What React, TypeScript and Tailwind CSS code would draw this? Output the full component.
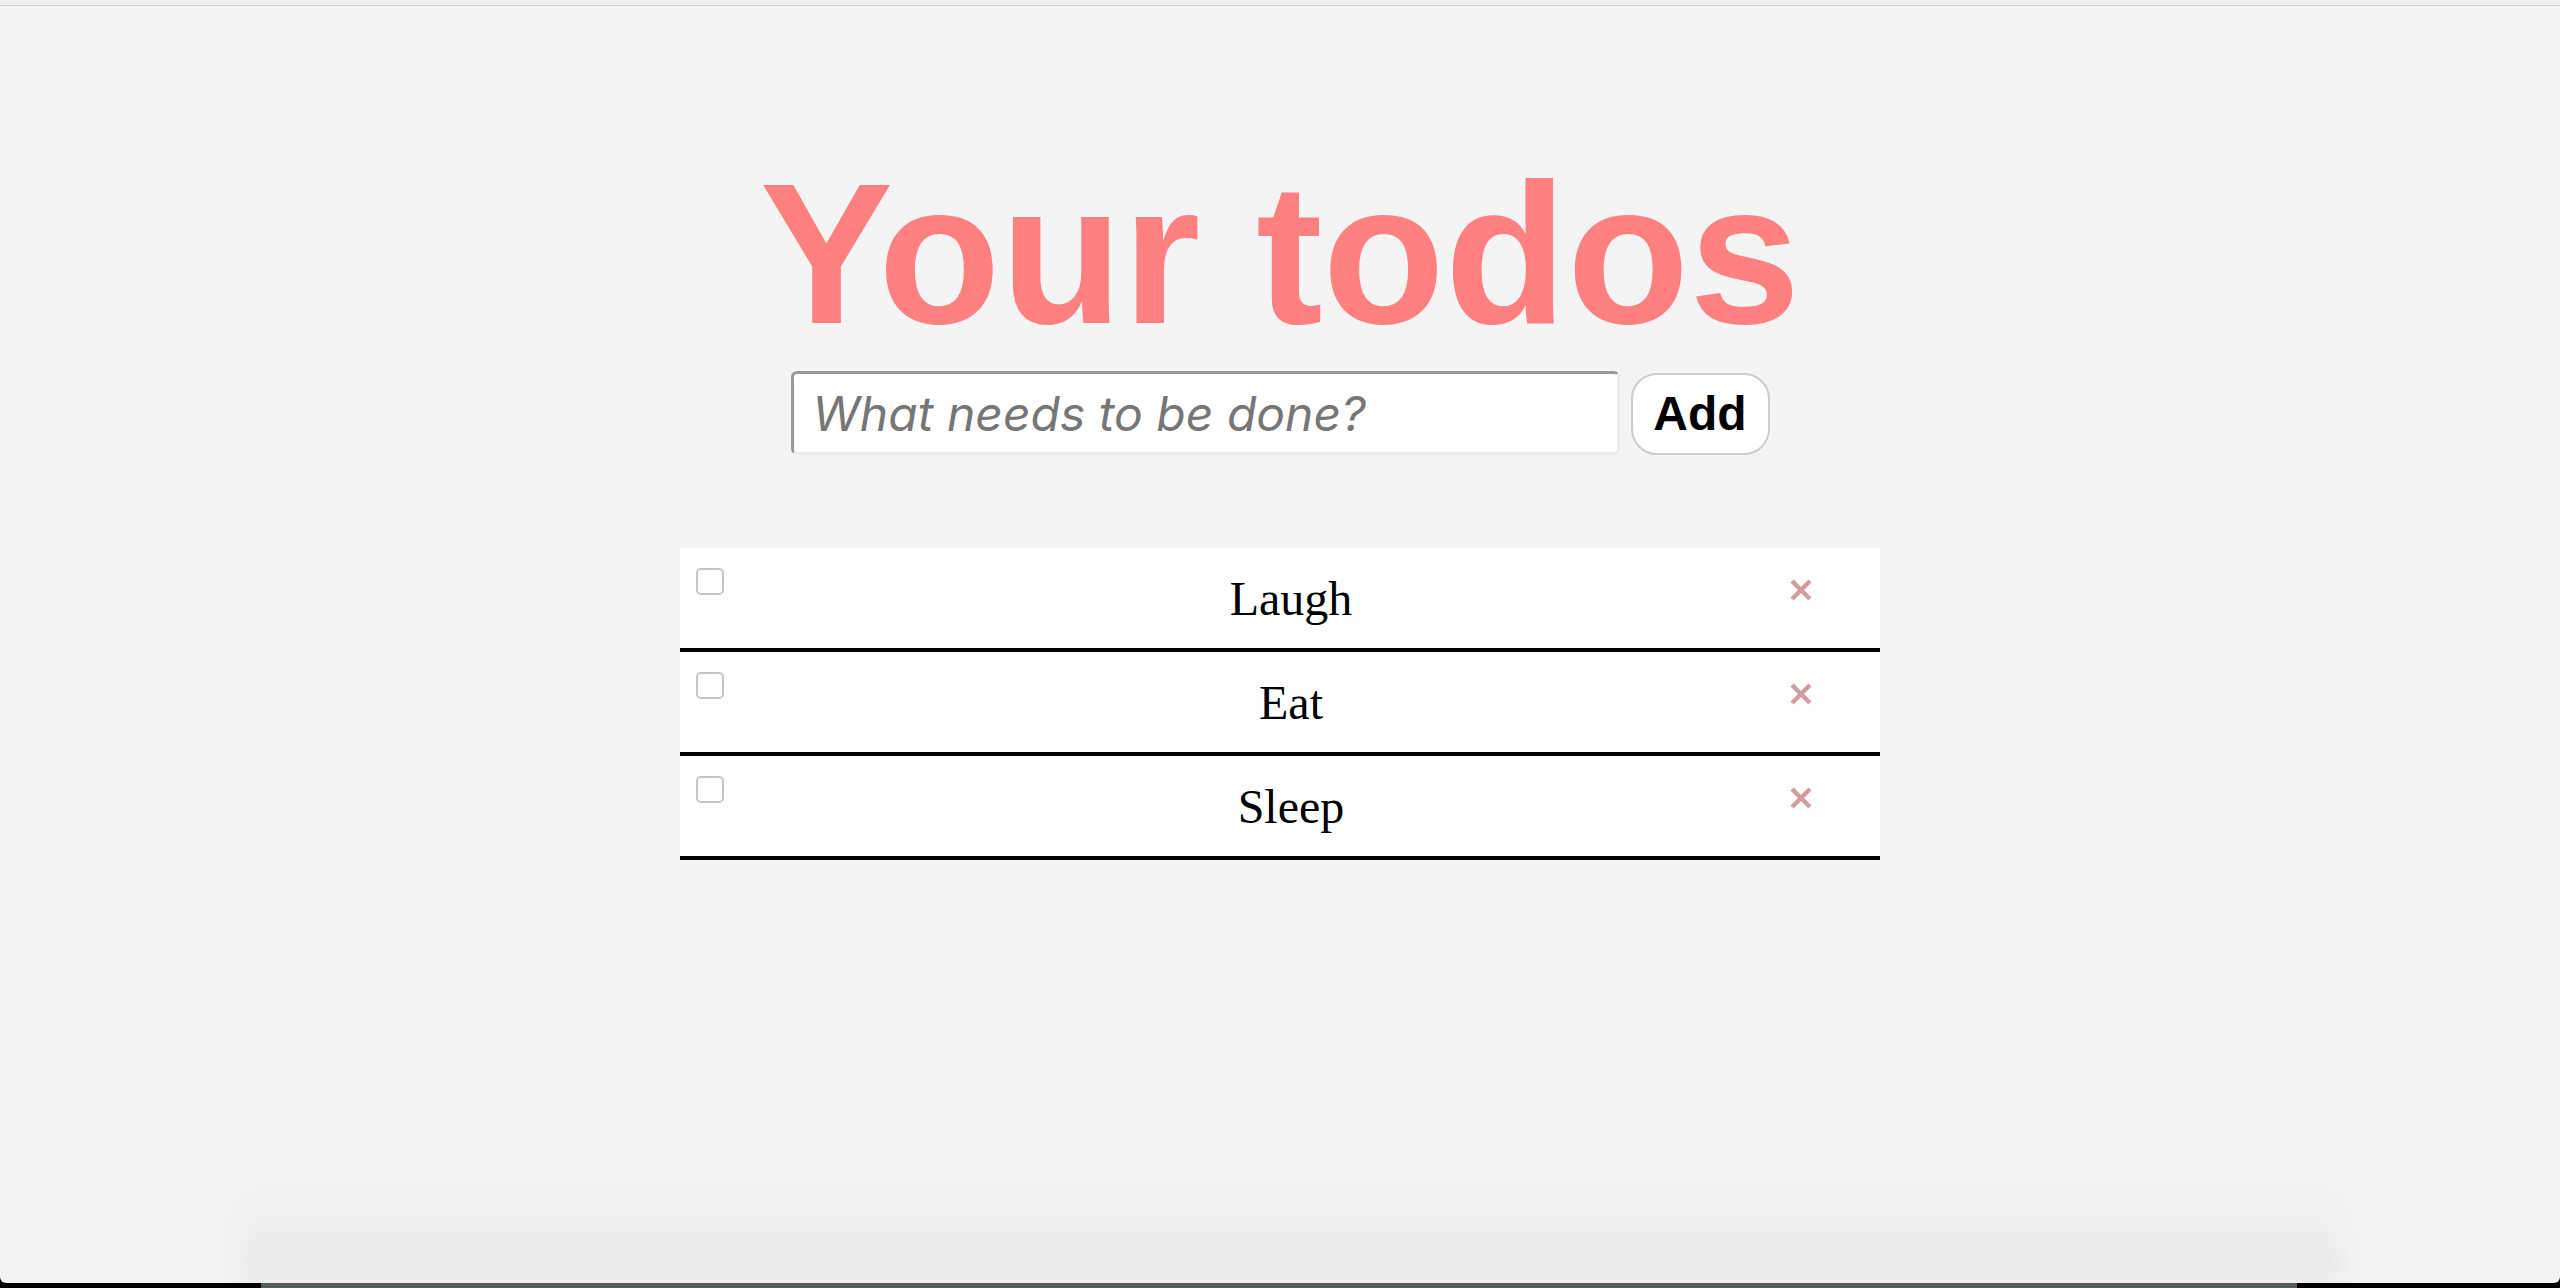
import React from "react";

const TODOS = ["Laugh", "Eat", "Sleep"];

function CloseIcon() {
  return (
    <svg width="24" height="24" viewBox="0 0 24 24" className="block">
      <path d="M3 3 L21 21 M21 3 L3 21" stroke="#d39c9c" strokeWidth="4.5" strokeLinecap="butt" />
    </svg>
  );
}

function TodoRow({ label }: { label: string }) {
  return (
    <li className="flex h-[104px] bg-white border-b-4 border-black">
      <input
        type="checkbox"
        className="appearance-none shrink-0 w-[28px] h-[27px] mt-[20px] ml-[16px] mr-[69px] rounded-[5px] border-2 border-[#c6c6c6] bg-white"
      />
      <span className="flex-1 text-center pt-[15px] text-[48px] text-black" style={{ fontFamily: '"Liberation Serif", serif' }}>
        {label}
      </span>
      <button className="shrink-0 mt-[30px] mr-[67px] self-start">
        <CloseIcon />
      </button>
    </li>
  );
}

export default function App() {
  return (
    <div className="h-[1288px] flex flex-col bg-black overflow-hidden">
      <div className="relative flex-1 flex flex-col bg-[#f4f4f4] rounded-b-[6px] overflow-hidden">
        {/* browser chrome edge */}
        <div className="h-[6px] bg-[#f0f0f0] border-b border-[#d0d0d0]" />

        <div className="flex flex-col items-center">
          <h1
            className="mt-[136px] text-[200px] leading-[224px] font-bold text-[#ff8080]"
            style={{ fontFamily: '"Liberation Sans", Arial, sans-serif' }}
          >
            Your todos
          </h1>

          <div className="mt-[5px] flex items-end gap-[11px]">
            <input
              type="text"
              placeholder="What needs to be done?"
              className="w-[829px] h-[84px] px-[19px] bg-white rounded-[6px] border-[3px] border-t-[#9a9a9a] border-l-[#9a9a9a] border-r-[#ececec] border-b-[#ececec] text-[48px] italic text-black placeholder:text-[#767676] outline-none"
              style={{ fontFamily: 'Inter, "Liberation Sans", sans-serif' }}
            />
            <button
              className="w-[139px] h-[82px] bg-white rounded-[26px] border-2 border-[#cdcdcd] text-[48px] font-bold text-black"
              style={{ fontFamily: '"Liberation Sans", Arial, sans-serif' }}
            >
              Add
            </button>
          </div>

          <ul className="mt-[93px] w-[1200px]">
            {TODOS.map((t) => (
              <TodoRow key={t} label={t} />
            ))}
          </ul>
        </div>

        {/* dock shadow over the bottom of the window */}
        <div className="pointer-events-none absolute left-[240px] right-[220px] bottom-0 h-[100px] bg-gradient-to-b from-transparent to-black/[0.06] blur-[14px]" />
      </div>
      <div className="h-[5px] flex">
        <div className="w-[261px] bg-black" />
        <div className="flex-1 bg-[#535d5b]" />
        <div className="w-[263px] bg-black" />
      </div>
    </div>
  );
}
